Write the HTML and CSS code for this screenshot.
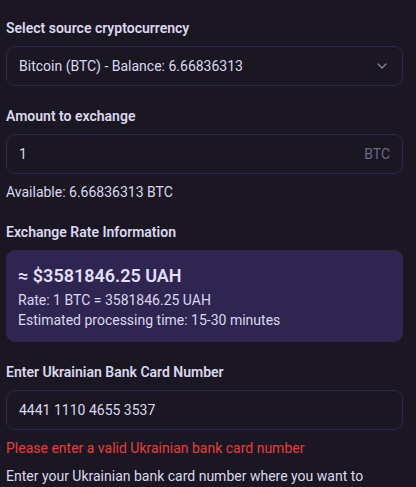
FILE: index.html
```html
<!DOCTYPE html>
<html lang="en">
<head>
<meta charset="utf-8">
<title>Exchange</title>
<link rel="stylesheet" href="styles.css">
</head>
<body>
<main class="form">
  <section class="group">
    <label class="label">Select source cryptocurrency</label>
    <div class="field select">
      <span class="value">Bitcoin (BTC) - Balance: 6.66836313</span>
      <svg class="chevron" width="10" height="6" viewBox="0 0 10 6"><path d="M1 1 L5 5 L9 1" fill="none" stroke="currentColor" stroke-width="1.2" stroke-linecap="round" stroke-linejoin="round"/></svg>
    </div>
  </section>
  <section class="group">
    <label class="label">Amount to exchange</label>
    <div class="field">
      <span class="value">1</span>
      <span class="suffix">BTC</span>
    </div>
    <p class="note">Available: 6.66836313 BTC</p>
  </section>
  <section class="group">
    <label class="label">Exchange Rate Information</label>
    <div class="rate-card">
      <div class="rate-total">≈ $3581846.25 UAH</div>
      <div class="rate-line">Rate: 1 BTC = 3581846.25 UAH</div>
      <div class="rate-line">Estimated processing time: 15-30 minutes</div>
    </div>
  </section>
  <section class="group">
    <label class="label">Enter Ukrainian Bank Card Number</label>
    <div class="field">
      <span class="value">4441 1110 4655 3537</span>
    </div>
    <p class="error">Please enter a valid Ukrainian bank card number</p>
    <p class="note">Enter your Ukrainian bank card number where you want to receive funds</p>
  </section>
</main>
</body>
</html>
```
FILE: styles.css
```css
html, body {
  margin: 0;
  padding: 0;
  background: #1a1722;
  overflow: hidden;
}
body {
  font-family: Roboto, "Noto Sans", sans-serif;
  font-size: 14px;
  line-height: 20px;
  color: #dcd7ef;
}
.form {
  padding: 18px 13px 0 6px;
  display: flex;
  flex-direction: column;
  gap: 20px;
}
.group {
  display: flex;
  flex-direction: column;
}
.label {
  display: block;
  font-weight: 600;
  margin-bottom: 8px;
  color: #dcd7ef;
}
.field {
  height: 38px;
  border: 1px solid #2f2850;
  border-radius: 9px;
  display: flex;
  align-items: center;
  justify-content: space-between;
  padding: 0 12px;
}
.value {
  color: #dcd7ef;
}
.suffix {
  color: #6c6880;
}
.chevron {
  color: #8c88a0;
  margin-right: 3px;
}
.note {
  margin: 8px 0 0;
  color: #dcd7ef;
}
.error {
  margin: 8px 0 0;
  color: #e53e3e;
}
.rate-card {
  background: #2e2651;
  border-radius: 9px;
  padding: 12px;
}
.rate-total {
  font-size: 18px;
  line-height: 28px;
  font-weight: 600;
  color: #e4dff5;
}
.rate-line {
  color: #dcd7ef;
}
```
